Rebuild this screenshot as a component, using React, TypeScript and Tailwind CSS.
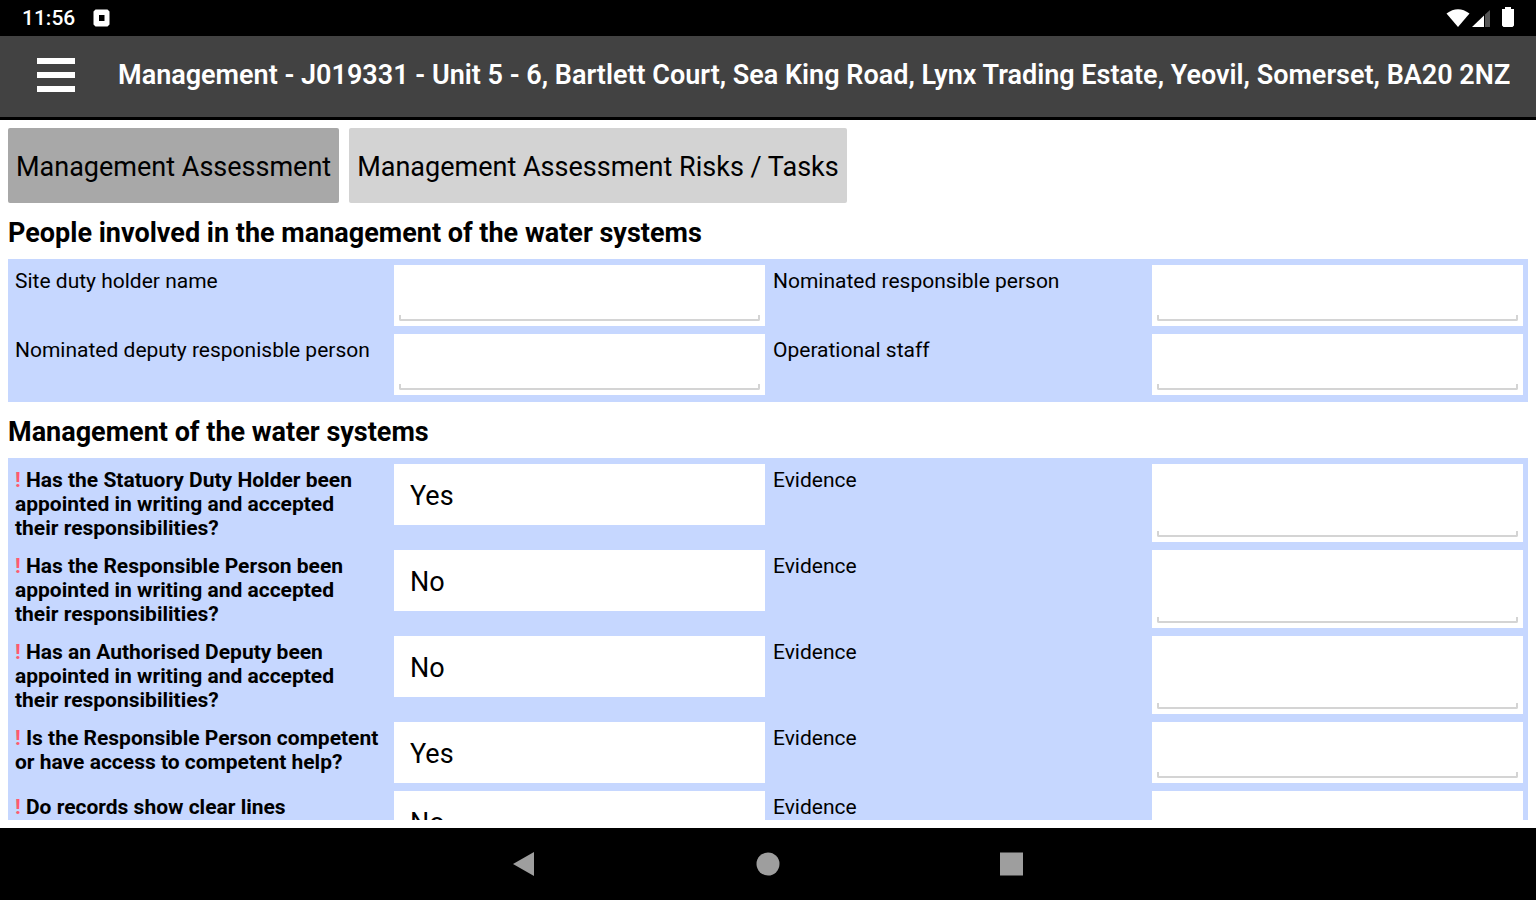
import { useState } from "react"
import { clsx } from "clsx"

const TABS = ["Management Assessment", "Management Assessment Risks / Tasks"]

const PEOPLE = [
  "Site duty holder name",
  "Nominated responsible person",
  "Nominated deputy responisble person",
  "Operational staff",
]

const QUESTIONS = [
  { text: "Has the Statuory Duty Holder been appointed in writing and accepted their responsibilities?", answer: "Yes" },
  { text: "Has the Responsible Person been appointed in writing and accepted their responsibilities?", answer: "No" },
  { text: "Has an Authorised Deputy been appointed in writing and accepted their responsibilities?", answer: "No" },
  { text: "Is the Responsible Person competent or have access to competent help?", answer: "Yes" },
  { text: "Do records show clear lines", answer: "No" },
]

function StatusBar() {
  return (
    <div className="flex h-9 shrink-0 items-center justify-between bg-black pr-5 pl-[22px] text-white">
      <div className="flex items-center gap-[18px]">
        <span className="text-[21px] leading-6 font-medium">11:56</span>
        <svg width="17" height="18" viewBox="0 0 17 18" aria-hidden="true">
          <path
            fill="currentColor"
            fillRule="evenodd"
            d="M2.500 0.500h12l2 2v13l-2 2h-12l-2-2v-13zM6 6v6h5.500V6z"
          />
        </svg>
      </div>
      <svg width="70" height="24" viewBox="0 0 70 24" aria-hidden="true">
        <path fill="#fff" d="M0.500 7.500Q12 -1 23.500 7.500L12 21z" />
        <path fill="#fff" d="M26 21L38 9.500V21z" />
        <path fill="#555" d="M39 8.500L44 4V21H39z" />
        <path fill="#fff" d="M59 1h6v2h3v16.500L66.500 21h-9L56 19.500V3h3z" />
      </svg>
    </div>
  )
}

function Header() {
  return (
    <header className="flex h-[84px] shrink-0 items-center gap-[42px] border-b-3 border-black bg-[#424242] pb-1 pl-9 text-white">
      <button type="button" aria-label="Menu" className="flex w-10 shrink-0 flex-col gap-2 px-px">
        <span className="h-[6px] w-full bg-white" />
        <span className="h-[6px] w-full bg-white" />
        <span className="h-[6px] w-full bg-white" />
      </button>
      <h1 className="truncate text-[27px] leading-8 font-semibold">
        Management - J019331 - Unit 5 - 6, Bartlett Court, Sea King Road, Lynx Trading Estate, Yeovil, Somerset, BA20 2NZ
      </h1>
    </header>
  )
}

/** Text box with the Android style underline that turns up at both ends. */
function TextField({ id }: { id: string }) {
  return (
    <div className="flex min-h-[61px] flex-col bg-white px-[5px] pb-[5px]">
      <textarea id={id} rows={1} className="min-h-0 w-full flex-1 resize-none px-2 pt-3 text-[27px] leading-8 outline-none" />
      <div className="h-[6px] rounded-b-xs border-x-2 border-b-2 border-[#d4d4d4]" />
    </div>
  )
}

function Panel({ title, children }: { title: string; children: React.ReactNode }) {
  return (
    <section>
      <h2 className="pt-[14px] pb-[10px] text-[27px] leading-8 font-bold">{title}</h2>
      <div className="grid grid-cols-4 gap-2 bg-[#c6d7ff] pt-[6px] pr-[5px] pb-[7px] pl-[7px]">{children}</div>
    </section>
  )
}

const labelClass = "pt-1 pr-1 pb-[2px] text-[21px] leading-6"

export default function App() {
  const [tab, setTab] = useState(0)

  return (
    <div className="flex h-screen flex-col bg-white font-[Roboto,sans-serif] text-black">
      <StatusBar />
      <Header />

      <main className="flex min-h-0 flex-1 flex-col p-2">
        <div className="min-h-0 flex-1 overflow-hidden">
          <nav className="flex gap-[10px]">
            {TABS.map((name, i) => (
              <button
                key={name}
                type="button"
                onClick={() => setTab(i)}
                className={clsx(
                  "h-[75px] rounded-xs px-2 pt-[2px] text-[27px] leading-8 whitespace-nowrap",
                  tab === i ? "bg-[#a8a8a8]" : "bg-[#d3d3d3]"
                )}
              >
                {name}
              </button>
            ))}
          </nav>

          <Panel title="People involved in the management of the water systems">
            {PEOPLE.map((name, i) => (
              <div key={name} className="contents">
                <label htmlFor={`person-${i}`} className={labelClass}>
                  {name}
                </label>
                <TextField id={`person-${i}`} />
              </div>
            ))}
          </Panel>

          <Panel title="Management of the water systems">
            {QUESTIONS.map((q, i) => (
              <div key={q.text} className="contents">
                <label htmlFor={`answer-${i}`} className={clsx(labelClass, "font-bold")}>
                  <span className="text-[#ff5a6e]">!</span> {q.text}
                </label>
                <select
                  id={`answer-${i}`}
                  defaultValue={q.answer}
                  className="h-[61px] w-full appearance-none self-start bg-white px-4 pt-[2px] text-[27px] leading-8"
                >
                  <option>Yes</option>
                  <option>No</option>
                </select>
                <label htmlFor={`evidence-${i}`} className={labelClass}>
                  Evidence
                </label>
                <TextField id={`evidence-${i}`} />
              </div>
            ))}
          </Panel>
        </div>
      </main>

      <footer className="flex h-[72px] shrink-0 items-center justify-center gap-[218px] bg-black text-[#9e9e9e]">
        <button type="button" aria-label="Back">
          <svg width="26" height="26" viewBox="0 0 26 26" aria-hidden="true">
            <path fill="currentColor" d="M2 13L23 1v24z" />
          </svg>
        </button>
        <button type="button" aria-label="Home">
          <svg width="26" height="26" viewBox="0 0 26 26" aria-hidden="true">
            <circle cx="13" cy="13" r="11.500" fill="currentColor" />
          </svg>
        </button>
        <button type="button" aria-label="Recent apps">
          <svg width="26" height="26" viewBox="0 0 26 26" aria-hidden="true">
            <rect x="1" y="1.500" width="23" height="23" fill="currentColor" />
          </svg>
        </button>
      </footer>
    </div>
  )
}
